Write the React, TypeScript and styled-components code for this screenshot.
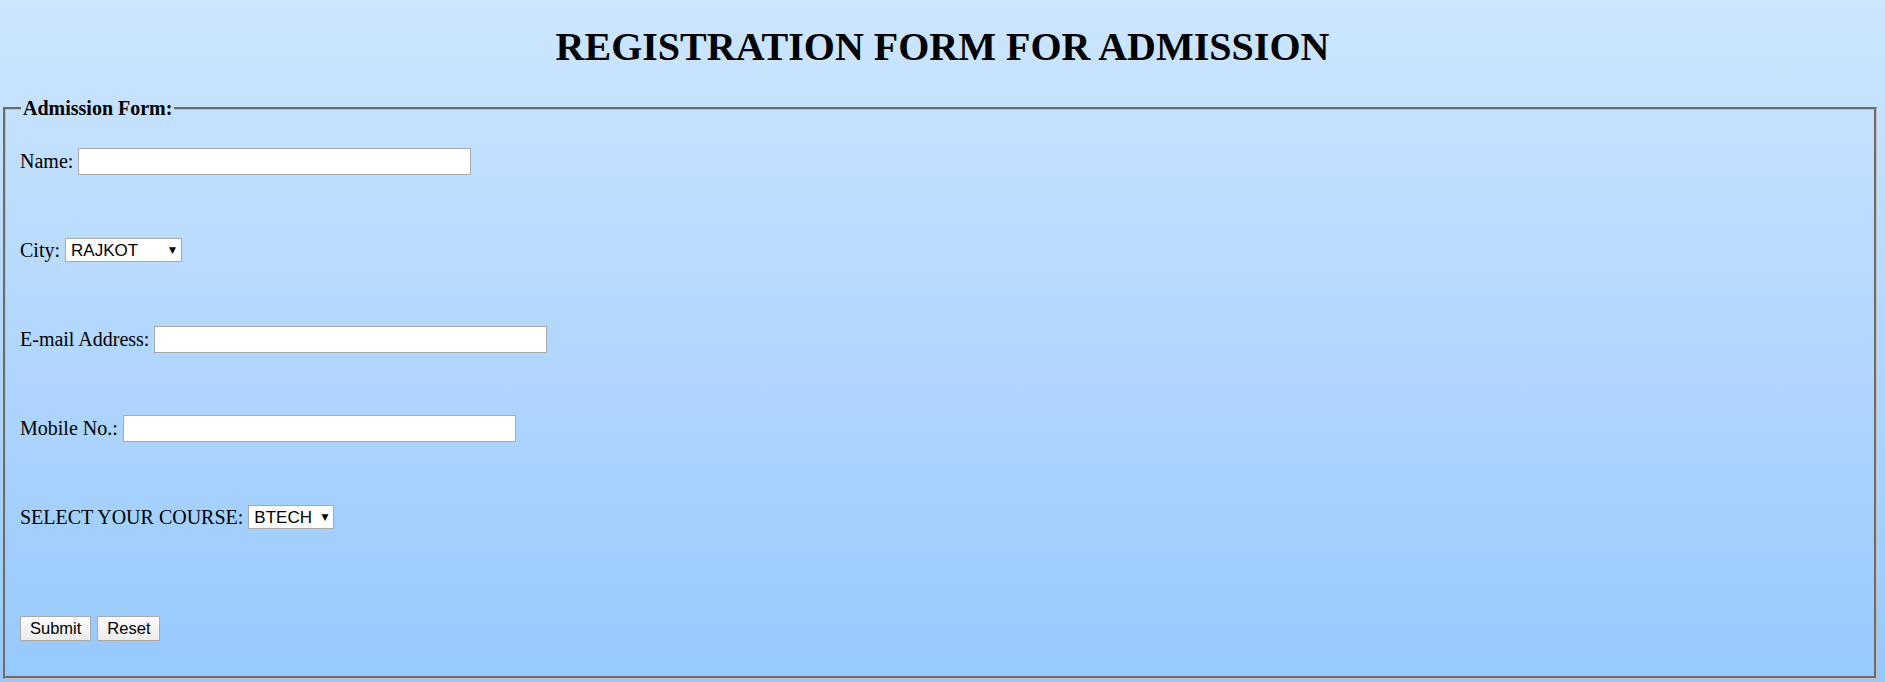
import React from "react";
import styled, { createGlobalStyle } from "styled-components";

const GlobalStyle = createGlobalStyle`
    html, body {
        margin: 0;
        padding: 0;
        height: 100%;
    }
    body {
        font-family: "Liberation Serif", "Times New Roman", serif;
        color: #000;
    }
`;

export default function App() {
    return (
        <StyledPage>
            <GlobalStyle />
            <StyledTitle>REGISTRATION FORM FOR ADMISSION</StyledTitle>
            <form onSubmit={(e) => e.preventDefault()}>
                <StyledFieldset>
                    <StyledLegend>Admission Form:</StyledLegend>
                    <StyledRow>
                        Name: <StyledInput type="text" />
                    </StyledRow>
                    <StyledRow>
                        City:
                        <StyledSelectWrap>
                            <StyledSelect $width={117} defaultValue="RAJKOT">
                                <option>RAJKOT</option>
                                <option>AHMEDABAD</option>
                                <option>SURAT</option>
                                <option>VADODARA</option>
                            </StyledSelect>
                            <StyledArrow>▼</StyledArrow>
                        </StyledSelectWrap>
                    </StyledRow>
                    <StyledRow>
                        E-mail Address: <StyledInput type="email" />
                    </StyledRow>
                    <StyledRow>
                        Mobile No.: <StyledInput type="tel" />
                    </StyledRow>
                    <StyledRow $last>
                        SELECT YOUR COURSE:
                        <StyledSelectWrap>
                            <StyledSelect $width={86} defaultValue="BTECH">
                                <option>BTECH</option>
                                <option>MTECH</option>
                                <option>BCA</option>
                                <option>MCA</option>
                            </StyledSelect>
                            <StyledArrow>▼</StyledArrow>
                        </StyledSelectWrap>
                    </StyledRow>
                    <StyledButtons>
                        <StyledButton type="submit">Submit</StyledButton>
                        <StyledButton type="reset">Reset</StyledButton>
                    </StyledButtons>
                </StyledFieldset>
            </form>
        </StyledPage>
    )
};

const StyledPage = styled.div`
    display: flow-root;
    min-height: 100vh;
    box-sizing: border-box;
    background: linear-gradient(to bottom, #cde6ff, #97c9fd);
`;

const StyledTitle = styled.h1`
    font-size: 40px;
    font-weight: bold;
    text-align: center;
    margin: 24px 0 27px;
    line-height: 46px;
`;

const StyledFieldset = styled.fieldset`
    margin: 0 8px 0 3px;
    padding: 27px 14px 34px;
    border: 3px groove #c0c0c0;
    font-size: 20px;
`;

const StyledLegend = styled.legend`
    font-weight: bold;
    font-size: 20px;
    padding: 0 2px;
    margin-left: 1px;
`;

const StyledRow = styled.div<{ $last?: boolean }>`
    display: flex;
    align-items: center;
    gap: 5px;
    height: 28px;
    margin-bottom: ${(p) => (p.$last ? "83px" : "61px")};
`;

const StyledInput = styled.input`
    box-sizing: border-box;
    width: 393px;
    height: 27px;
    border: 1px solid #a9a9a9;
    background: #fff;
    padding: 1px 3px;
    font-family: "Liberation Sans", Arial, sans-serif;
    font-size: 16px;
    outline: none;
`;

const StyledSelectWrap = styled.span`
    position: relative;
    display: inline-flex;
`;

const StyledSelect = styled.select<{ $width: number }>`
    appearance: none;
    box-sizing: border-box;
    width: ${(p) => p.$width}px;
    height: 24px;
    border: 1px solid #a9a9a9;
    border-radius: 0;
    background: #fff;
    color: #000;
    padding: 0 18px 0 5px;
    font-family: "Liberation Sans", Arial, sans-serif;
    font-size: 17px;
    outline: none;
`;

const StyledArrow = styled.span`
    position: absolute;
    right: 6px;
    top: 50%;
    transform: translateY(-50%);
    font-family: "DejaVu Sans", sans-serif;
    font-size: 9px;
    pointer-events: none;
`;

const StyledButtons = styled.div`
    display: flex;
    align-items: center;
    gap: 6px;
    height: 28px;
`;

const StyledButton = styled.button`
    box-sizing: border-box;
    height: 25px;
    padding: 0 9px;
    border: 1px solid #a9a9a9;
    border-radius: 1px;
    background: linear-gradient(to bottom, #fdfdfd, #ececec);
    font-family: "Liberation Sans", Arial, sans-serif;
    font-size: 16.5px;
    color: #000;
`;
